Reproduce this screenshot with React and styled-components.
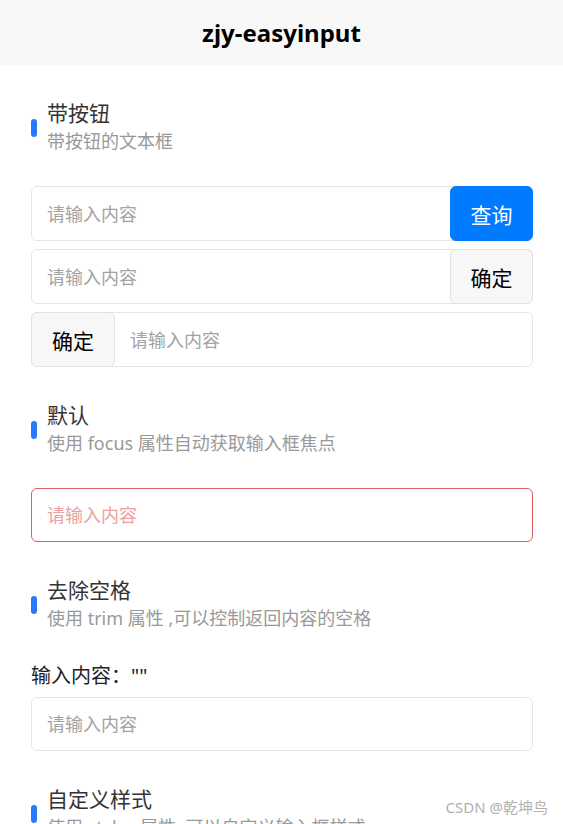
import React from "react";
import styled, { createGlobalStyle } from "styled-components";

const Global = createGlobalStyle`
  html, body { margin: 0; padding: 0; background: #fff; }
  body { font-family: "Noto Sans", "Noto Sans CJK SC", sans-serif; color: #333; }
  * { box-sizing: border-box; }
`;

const Page = styled.div`
  position: relative;
  width: 563px;
  height: 824px;
  overflow: hidden;
  background: #fff;
`;

const Header = styled.header`
  height: 65px;
  background: #f8f8f8;
  display: flex;
  align-items: center;
  justify-content: center;
`;

const HeaderTitle = styled.h1`
  margin: 0;
  font-family: "Noto Sans", "Noto Sans CJK SC", sans-serif;
  font-size: 24px;
  font-weight: 700;
  color: #000;
  line-height: 30px;
`;

const Section = styled.section`
  padding: 34px 30px 0 31px;
`;

const SectionHead = styled.div`
  display: flex;
  align-items: center;
  margin-bottom: 33px;
`;

const Bar = styled.span`
  width: 6px;
  height: 18px;
  border-radius: 10px;
  background: #2979ff;
  margin-right: 10px;
  margin-top: 3px;
  flex: none;
`;

const HeadText = styled.div`
  display: flex;
  flex-direction: column;
`;

const Title = styled.div`
  font-size: 21px;
  line-height: 28px;
  color: #333;
`;

const SubTitle = styled.div`
  font-size: 18px;
  line-height: 24px;
  margin-top: 2px;
  color: #999;
`;

const Stack = styled.div`
  display: flex;
  flex-direction: column;
  gap: 8px;
`;

const InputBox = styled.div`
  display: flex;
  align-items: stretch;
  height: ${(p) => (p.$tall ? 55 : 54)}px;
  border: 1px solid ${(p) => (p.$error ? "#d9615d" : "#e5e5e5")};
  border-radius: 6px;
  background: #fff;
`;

const Field = styled.input`
  flex: 1;
  min-width: 0;
  border: none;
  outline: none;
  background: transparent;
  padding: 0 15px;
  font-family: "Noto Sans", "Noto Sans CJK SC", sans-serif;
  font-size: 18px;
  color: #333;
  &::placeholder {
    color: ${(p) => (p.$error ? "#eea0a0" : "#a3a3a3")};
  }
`;

const SlotButton = styled.button`
  flex: none;
  width: ${(p) => (p.$left ? 84 : 83)}px;
  margin: -1px;
  margin-${(p) => (p.$left ? "right" : "left")}: 0;
  border-radius: 6px;
  border: 1px solid ${(p) => (p.$primary ? "#007aff" : "#e2e2e2")};
  background: ${(p) => (p.$primary ? "#007aff" : "#f7f7f7")};
  color: ${(p) => (p.$primary ? "#fff" : "#000")};
  font-family: "Noto Sans", "Noto Sans CJK SC", sans-serif;
  font-size: 21px;
  padding: 0;
  display: flex;
  align-items: center;
  justify-content: center;
`;

const Label = styled.div`
  font-size: 20px;
  line-height: 26px;
  color: #222;
  margin-bottom: 8px;
`;

const Watermark = styled.div`
  position: absolute;
  right: 15px;
  bottom: 8px;
  font-family: "Noto Sans", "Noto Sans CJK SC", sans-serif;
  font-size: 15px;
  line-height: 18px;
  color: #b0b0b0;
`;

function Head({ title, sub }) {
  return (
    <SectionHead>
      <Bar />
      <HeadText>
        <Title>{title}</Title>
        <SubTitle>{sub}</SubTitle>
      </HeadText>
    </SectionHead>
  );
}

export default function App() {
  return (
    <Page>
      <Global />
      <Header>
        <HeaderTitle>zjy-easyinput</HeaderTitle>
      </Header>

      <Section>
        <Head title="带按钮" sub="带按钮的文本框" />
        <Stack>
          <InputBox $tall>
            <Field placeholder="请输入内容" />
            <SlotButton $primary>查询</SlotButton>
          </InputBox>
          <InputBox $tall>
            <Field placeholder="请输入内容" />
            <SlotButton>确定</SlotButton>
          </InputBox>
          <InputBox $tall>
            <SlotButton $left>确定</SlotButton>
            <Field placeholder="请输入内容" />
          </InputBox>
        </Stack>
      </Section>

      <Section>
        <Head title="默认" sub="使用 focus 属性自动获取输入框焦点" />
        <InputBox $error>
          <Field $error placeholder="请输入内容" />
        </InputBox>
      </Section>

      <Section>
        <Head title="去除空格" sub="使用 trim 属性 ,可以控制返回内容的空格" />
        <Label>输入内容：""</Label>
        <InputBox>
          <Field placeholder="请输入内容" />
        </InputBox>
      </Section>

      <Section>
        <Head title="自定义样式" sub="使用 styles 属性 ,可以自定义输入框样式" />
      </Section>

      <Watermark>CSDN @乾坤鸟</Watermark>
    </Page>
  );
}
